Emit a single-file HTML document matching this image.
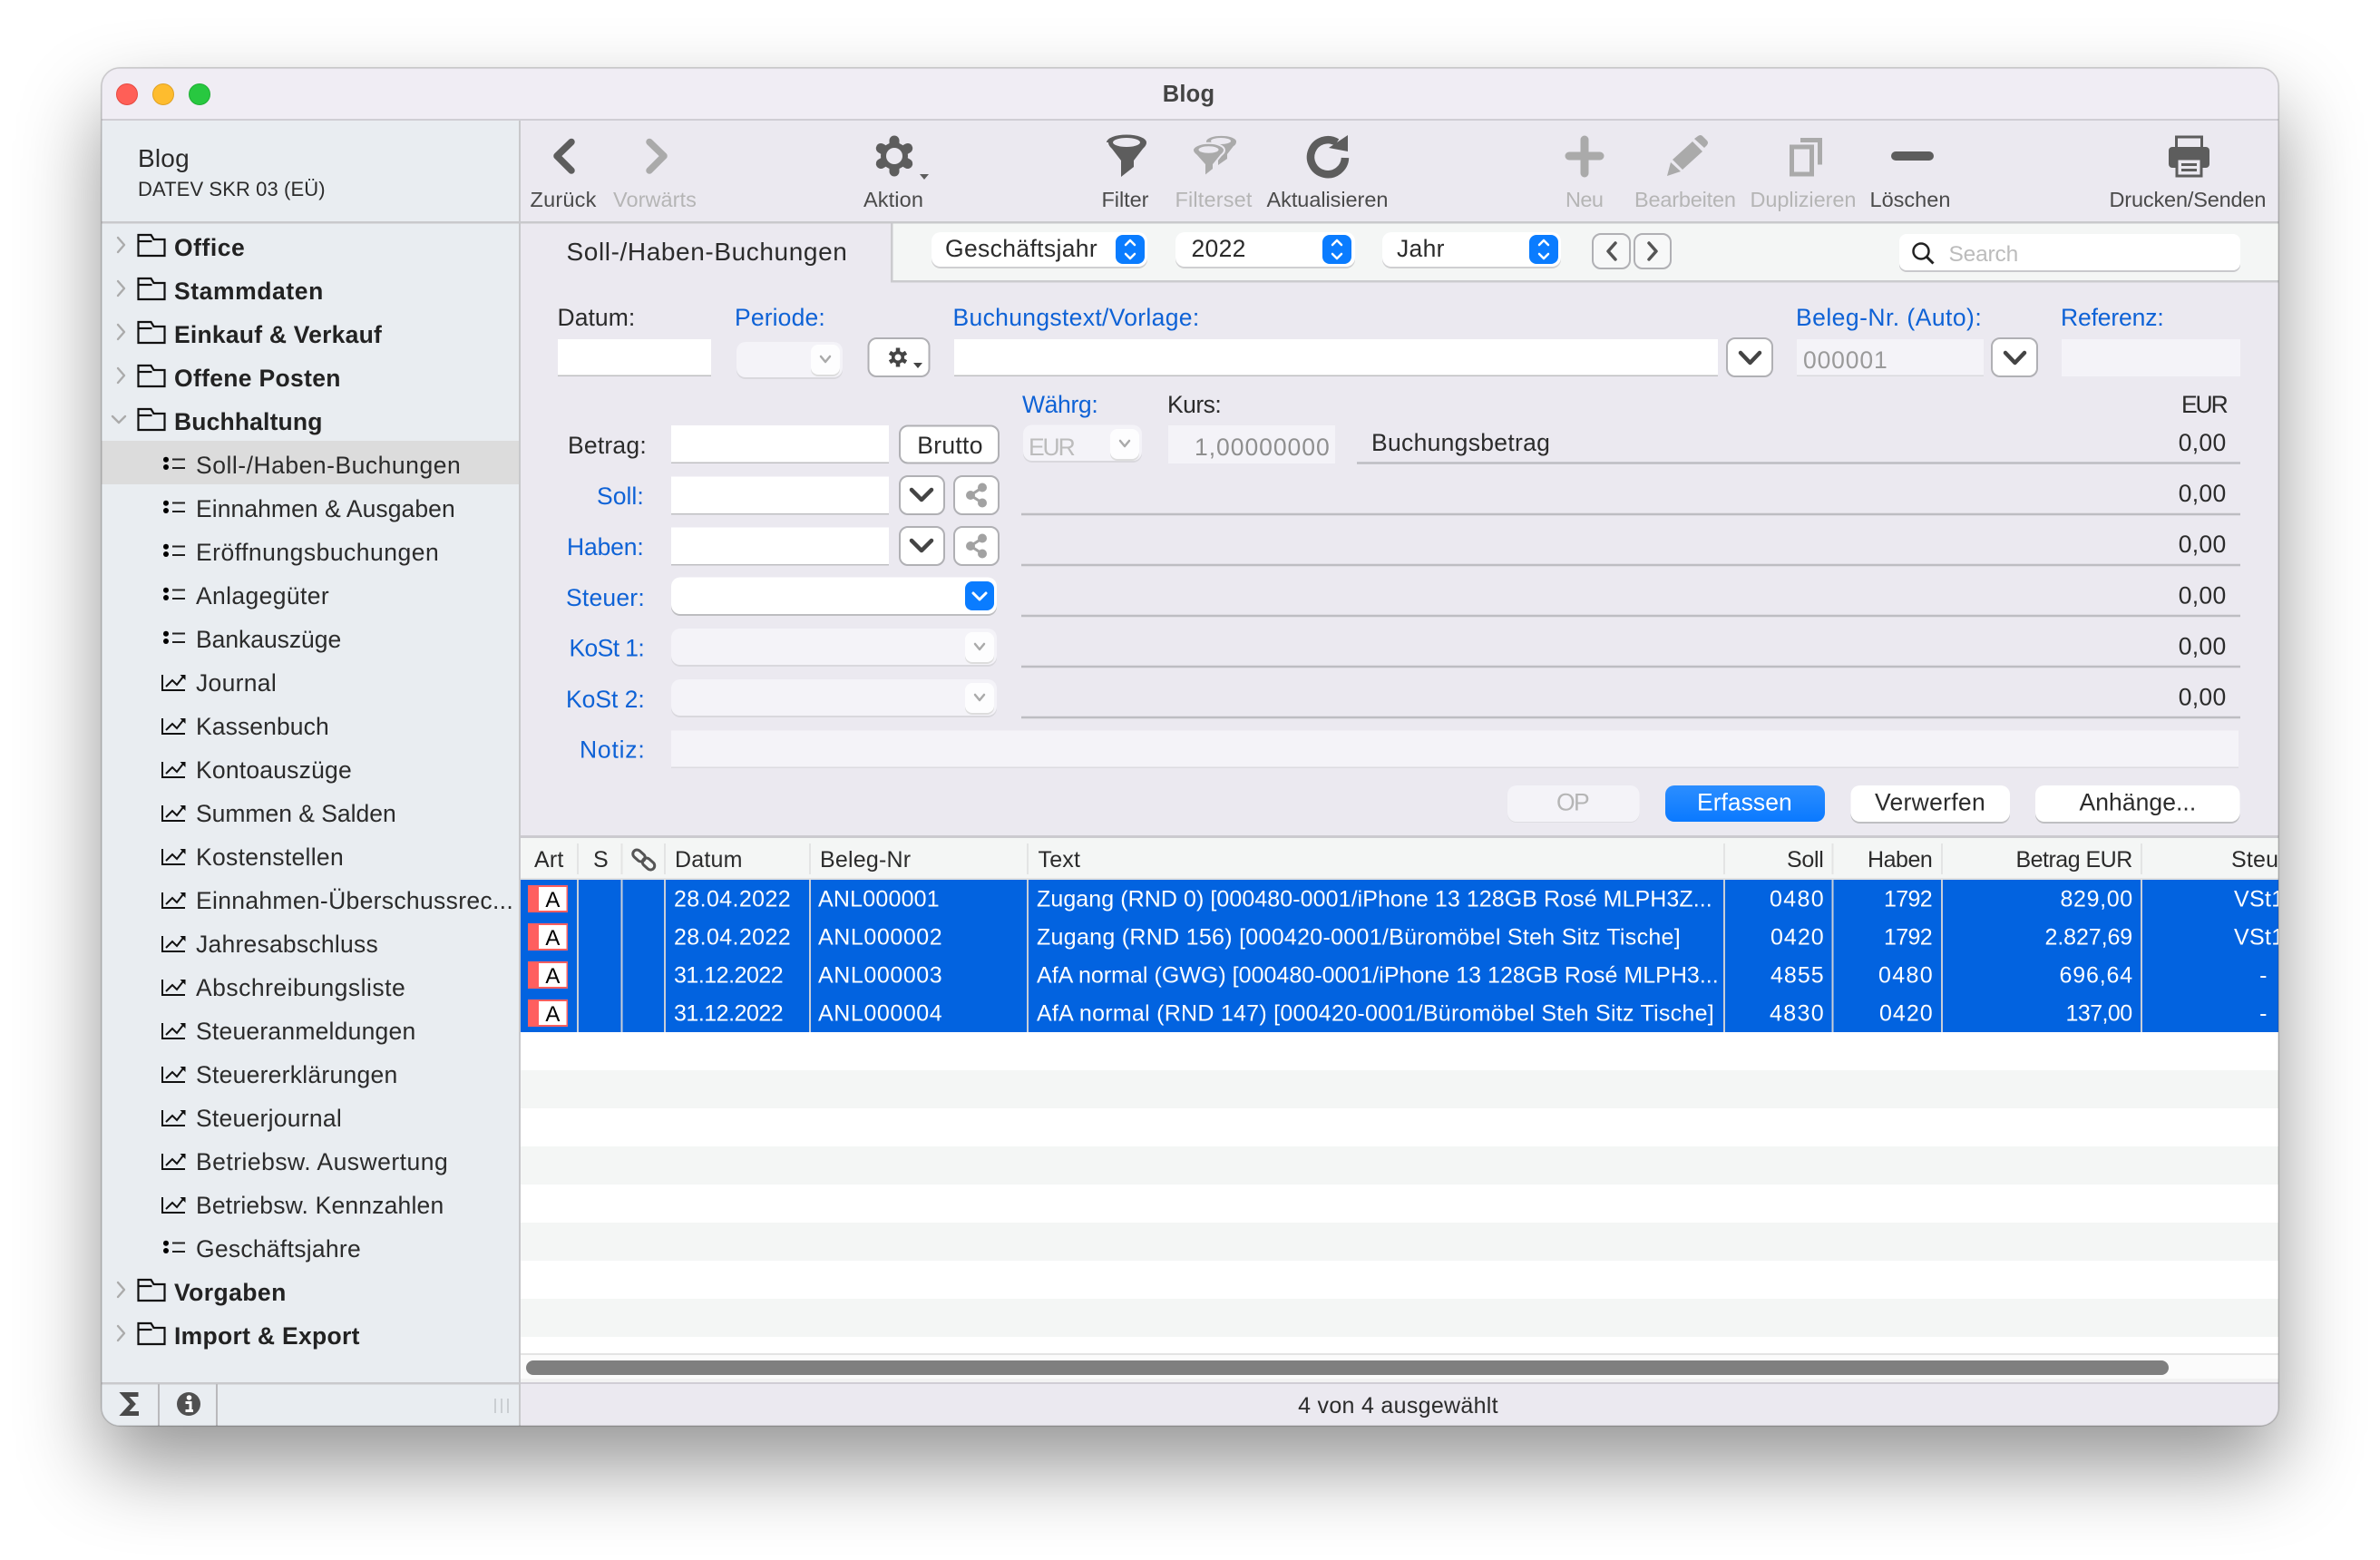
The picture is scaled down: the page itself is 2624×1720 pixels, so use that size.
<!DOCTYPE html>
<html lang="de"><head><meta charset="utf-8"><title>Blog</title>
<style>
html,body{margin:0;padding:0;background:#fff;width:2624px;height:1720px;overflow:hidden}
#w{position:absolute;left:112px;top:75px;width:2400px;height:1497px;border-radius:20px;box-shadow:0 44px 90px rgba(0,0,0,.42),0 0 2px rgba(0,0,0,.2)}
svg{position:absolute;left:0;top:0}
text{font-family:"Liberation Sans",sans-serif;font-size:26.5px;fill:#2b2b2b;letter-spacing:.3px;white-space:pre}
.b{font-weight:bold;fill:#222;letter-spacing:.2px}
.tb{font-size:23.5px;fill:#4a4a4a;letter-spacing:.1px;text-anchor:middle}
.d{fill:#b5b5b5}
.bl{fill:#0e62d6}
.r{text-anchor:end}
.m{text-anchor:middle}
.h{font-size:25px;letter-spacing:.2px;fill:#2b2b2b}
.c{font-size:25px;letter-spacing:.3px;fill:#fff}
.f{fill:#fff}
.fs{fill:#f4f3f8}
.ln{stroke:#bdbdc2;stroke-width:2.5;fill:none}
.btn{fill:#fff;stroke:#b0b0b4;stroke-width:2}
.ch{fill:none;stroke:#444;stroke-width:4.5;stroke-linecap:round;stroke-linejoin:round}
.cs{fill:none;stroke:#aaa;stroke-width:2.5;stroke-linecap:round;stroke-linejoin:round}
.cw{fill:none;stroke:#fff;stroke-width:2.5;stroke-linecap:round;stroke-linejoin:round}
</style></head><body>
<div id="w"></div>
<svg width="2624" height="1720" viewBox="0 0 2624 1720" xmlns="http://www.w3.org/2000/svg">
<defs>
<clipPath id="win"><rect x="112" y="75" width="2400" height="1497" rx="20"/></clipPath>
<g id="fo" fill="none" stroke="#111" stroke-width="2.2"><path d="M152.500 259h14l3 5h12v18h-29z"/><path d="M152.500 266h15"/></g>
<g id="cr" fill="none" stroke="#ababab" stroke-width="2.4" stroke-linecap="round" stroke-linejoin="round"><path d="M130 262l7 8-7 8"/></g>
<g id="li"><circle cx="183" cy="20.7" r="3"/><circle cx="183" cy="29" r="3"/><path d="M190 20.5h14M190 30h14" stroke="#222" stroke-width="2"/></g>
<g id="ct"><path d="M179 18V35H204" fill="none" stroke="#111" stroke-width="2"/><path d="M183 31l7-7 5 5 7-9" fill="none" stroke="#111" stroke-width="2"/><path d="M198.500 18H204.500V24z" fill="#111"/></g>
<g id="shr"><path d="M13 -8.500L0 0L13 8.500" fill="none" stroke="#a2a2a2" stroke-width="3"/><circle cx="0" cy="0" r="5" fill="#a2a2a2"/><circle cx="13" cy="-8.500" r="5" fill="#a2a2a2"/><circle cx="13" cy="8.500" r="5" fill="#a2a2a2"/></g>
<g id="pb"><rect x="0" y="2" width="32" height="33" rx="8" fill="#ddd"/><rect x="0" y="0" width="32" height="33" rx="8" fill="#fdfdfe"/><path d="M11 13l5 6 5-6" class="cs"/></g>
</defs>
<g clip-path="url(#win)">
<rect x="112" y="75" width="2400" height="1497" fill="#ebe9f0"/>
<rect x="112" y="75" width="2400" height="57" fill="#f0edf4"/>
<rect x="112" y="131" width="2400" height="2" fill="#d0ced4"/>
<!-- sidebar -->
<rect x="112" y="133" width="460" height="1439" fill="#e9edf1"/>
<rect x="112" y="486" width="460" height="48" fill="#dcdcdc"/>
<rect x="572" y="133" width="2" height="1439" fill="#c8c8cb"/>
<rect x="112" y="244" width="2400" height="2.500" fill="#c9c9cc"/>
<!-- traffic -->
<circle cx="140" cy="104" r="11.500" fill="#ff5f57" stroke="#e5483f" stroke-width="1"/>
<circle cx="180" cy="104" r="11.500" fill="#febc2e" stroke="#dfa123" stroke-width="1"/>
<circle cx="220" cy="104" r="11.500" fill="#28c840" stroke="#1fae33" stroke-width="1"/>
<text x="1310.500" y="112" class="b m" style="font-size:25.500px;fill:#444">Blog</text>
<!-- sidebar header -->
<text x="152" y="184" style="font-size:28px;letter-spacing:.2px;fill:#2b2b2b">Blog</text>
<text x="152" y="216" style="font-size:22px;letter-spacing:.1px;fill:#2b2b2b">DATEV SKR 03 (EÜ)</text>
<!-- folders -->
<use href="#fo"/><use href="#cr"/><text x="192" y="282" class="b" textLength="78">Office</text>
<use href="#fo" y="48"/><use href="#cr" y="48"/><text x="192" y="330" class="b" textLength="164.500">Stammdaten</text>
<use href="#fo" y="96"/><use href="#cr" y="96"/><text x="192" y="378" class="b" textLength="229">Einkauf &amp; Verkauf</text>
<use href="#fo" y="144"/><use href="#cr" y="144"/><text x="192" y="426" class="b" textLength="183.700">Offene Posten</text>
<use href="#fo" y="192"/><path d="M124 459l7 7 7-7" fill="none" stroke="#ababab" stroke-width="2.400" stroke-linecap="round" stroke-linejoin="round"/><text x="192" y="474" class="b" textLength="163.600">Buchhaltung</text>
<use href="#fo" y="1152"/><use href="#cr" y="1152"/><text x="192" y="1434" class="b" textLength="123.500">Vorgaben</text>
<use href="#fo" y="1200"/><use href="#cr" y="1200"/><text x="192" y="1482" class="b" textLength="204.600">Import &amp; Export</text>
<!-- items -->
<use href="#li" y="486"/><text x="216" y="522" textLength="292">Soll-/Haben-Buchungen</text>
<use href="#li" y="534"/><text x="216" y="570" textLength="286">Einnahmen &amp; Ausgaben</text>
<use href="#li" y="582"/><text x="216" y="618" textLength="268">Eröffnungsbuchungen</text>
<use href="#li" y="630"/><text x="216" y="666" textLength="147">Anlagegüter</text>
<use href="#li" y="678"/><text x="216" y="714" textLength="160.500">Bankauszüge</text>
<use href="#ct" y="726"/><text x="216" y="762" textLength="89">Journal</text>
<use href="#ct" y="774"/><text x="216" y="810" textLength="147">Kassenbuch</text>
<use href="#ct" y="822"/><text x="216" y="858" textLength="172">Kontoauszüge</text>
<use href="#ct" y="870"/><text x="216" y="906" textLength="221">Summen &amp; Salden</text>
<use href="#ct" y="918"/><text x="216" y="954" textLength="163">Kostenstellen</text>
<use href="#ct" y="966"/><text x="216" y="1002" textLength="350">Einnahmen-Überschussrec...</text>
<use href="#ct" y="1014"/><text x="216" y="1050" textLength="201">Jahresabschluss</text>
<use href="#ct" y="1062"/><text x="216" y="1098" textLength="231">Abschreibungsliste</text>
<use href="#ct" y="1110"/><text x="216" y="1146" textLength="242.500">Steueranmeldungen</text>
<use href="#ct" y="1158"/><text x="216" y="1194" textLength="222.500">Steuererklärungen</text>
<use href="#ct" y="1206"/><text x="216" y="1242" textLength="161">Steuerjournal</text>
<use href="#ct" y="1254"/><text x="216" y="1290" textLength="278">Betriebsw. Auswertung</text>
<use href="#ct" y="1302"/><text x="216" y="1338" textLength="273.500">Betriebsw. Kennzahlen</text>
<use href="#li" y="1350"/><text x="216" y="1386" textLength="182">Geschäftsjahre</text>
<!-- sidebar footer -->
<rect x="112" y="1524" width="460" height="2.500" fill="#c9c9cc"/>
<rect x="174" y="1526" width="2" height="46" fill="#b9b9bc"/><rect x="238" y="1526" width="2" height="46" fill="#b9b9bc"/>
<path d="M152.500 1537.500H137L146.500 1548L137 1558.500H153" fill="none" stroke="#4a4a4a" stroke-width="5"/>
<circle cx="208" cy="1548" r="13" fill="#505050"/><circle cx="208.500" cy="1541" r="2.800" fill="#fff"/><path d="M204.500 1546.500H210V1555M204.500 1555.500H213" stroke="#fff" stroke-width="3" fill="none"/>
<path d="M546 1542v16M553 1542v16M560 1542v16" stroke="#c3c6ca" stroke-width="1.600"/>
<!-- toolbar icons -->
<path d="M630 156.500L614 172L630 188" fill="none" stroke="#5d5d5d" stroke-width="7.500" stroke-linecap="round" stroke-linejoin="round"/>
<path d="M716 156.500L732 172L716 188" fill="none" stroke="#aaa" stroke-width="7.500" stroke-linecap="round" stroke-linejoin="round"/>
<text x="621" y="228" class="tb" textLength="73">Zurück</text><text x="722" y="228" class="tb d" textLength="92">Vorwärts</text>
<g transform="translate(986 172)"><circle r="15" fill="#5d5d5d"/><g stroke="#5d5d5d" stroke-width="11" stroke-linecap="round"><path d="M0-17V17"/><path d="M-14.700-8.500L14.700 8.500"/><path d="M-14.700 8.500L14.700-8.500"/></g><circle r="9" fill="#ebe9f0"/></g>
<path d="M1014 192h10l-5 6z" fill="#5d5d5d"/>
<text x="985" y="228" class="tb" textLength="66">Aktion</text>
<path d="M1220 157a22 8.500 0 0 1 44 0c0 3-2 5-4 7l-10 13v7l-14 11v-18l-10-13c-2-2-4-4-4-7z" fill="#5d5d5d"/><ellipse cx="1242" cy="157" rx="15" ry="5" fill="#ebe9f0"/>
<text x="1240.500" y="228" class="tb" textLength="52">Filter</text>
<path d="M1330 156a16 6 0 0 1 33 0c0 2-1 4-3 5l-7 9v5l-10 7v-12l-13-10z" fill="#aaa"/><ellipse cx="1346" cy="155.500" rx="11" ry="3.500" fill="#ebe9f0"/>
<path d="M1315 165.500a17 7.500 0 0 1 35 0c0 3-2 4-4 6l-8 10v5l-10 8v-13l-9-10c-2-2-4-3-4-6z" fill="#aaa" stroke="#ebe9f0" stroke-width="2"/><ellipse cx="1332.500" cy="165" rx="11" ry="3.800" fill="#ebe9f0"/>
<text x="1338" y="228" class="tb d" textLength="85">Filterset</text>
<path d="M1474 157A19 19 0 1 0 1483 174" fill="none" stroke="#5d5d5d" stroke-width="8.500"/><path d="M1486 149L1465 163L1486 167z" fill="#5d5d5d"/>
<text x="1463.500" y="228" class="tb" textLength="134">Aktualisieren</text>
<path d="M1747 154v37M1730 172h34" stroke="#aaa" stroke-width="9" stroke-linecap="round"/>
<text x="1747" y="228" class="tb d" textLength="42">Neu</text>
<path d="M1838 194l4-15 11 10z" fill="#aaa"/><path d="M1844 176L1866 156L1877 167L1855 187z" fill="#aaa"/><path d="M1868 153l4-3q3-2 5 0l5 5q2 2 0 5l-3 3z" fill="#aaa"/>
<text x="1858" y="228" class="tb d" textLength="112">Bearbeiten</text>
<rect x="1975.500" y="162" width="22" height="30" fill="none" stroke="#aaa" stroke-width="5"/><path d="M1985 154.500h21.500v27" fill="none" stroke="#aaa" stroke-width="5"/>
<text x="1988" y="228" class="tb d" textLength="117">Duplizieren</text>
<rect x="2085" y="167" width="47" height="10" rx="5" fill="#5d5d5d"/>
<text x="2106" y="228" class="tb" textLength="89">Löschen</text>
<rect x="2399.500" y="151" width="28" height="14" fill="none" stroke="#5d5d5d" stroke-width="3"/><rect x="2391" y="162" width="45" height="23" rx="4" fill="#5d5d5d"/><rect x="2400" y="175" width="27" height="19" fill="#ebe9f0" stroke="#5d5d5d" stroke-width="3"/><path d="M2405 181.500h17M2405 187.500h17" stroke="#5d5d5d" stroke-width="3"/>
<text x="2412" y="228" class="tb" textLength="173">Drucken/Senden</text>
<!-- tab strip -->
<rect x="983" y="246.500" width="1530" height="63" fill="#f4f6f5"/>
<rect x="982" y="246.500" width="2.500" height="64" fill="#cbcbce"/>
<rect x="982" y="309" width="1531" height="2.500" fill="#cbcbce"/>
<text x="624.500" y="287" style="font-size:28px;letter-spacing:.6px">Soll-/Haben-Buchungen</text>
<!-- popups -->
<rect x="1027" y="258" width="238" height="38" rx="10" fill="#cfcfd1"/><rect x="1027" y="256" width="238" height="38" rx="10" fill="#fff"/>
<rect x="1230" y="259" width="32" height="32" rx="8" fill="#0a7cff"/><path d="M1241 270l5-5 5 5M1241 280l5 5 5-5" class="cw"/>
<text x="1042" y="283" textLength="168">Geschäftsjahr</text>
<rect x="1296" y="258" width="198" height="38" rx="10" fill="#cfcfd1"/><rect x="1296" y="256" width="198" height="38" rx="10" fill="#fff"/>
<rect x="1458" y="259" width="32" height="32" rx="8" fill="#0a7cff"/><path d="M1469 270l5-5 5 5M1469 280l5 5 5-5" class="cw"/>
<text x="1313.500" y="283">2022</text>
<rect x="1524" y="258" width="197" height="38" rx="10" fill="#cfcfd1"/><rect x="1524" y="256" width="197" height="38" rx="10" fill="#fff"/>
<rect x="1686" y="259" width="32" height="32" rx="8" fill="#0a7cff"/><path d="M1697 270l5-5 5 5M1697 280l5 5 5-5" class="cw"/>
<text x="1540" y="283">Jahr</text>
<rect x="1756" y="258" width="41" height="38" rx="9" class="btn" style="fill:#f7f8f8"/><rect x="1802" y="258" width="40" height="38" rx="9" class="btn" style="fill:#f7f8f8"/>
<path d="M1781 268l-8 9 8 9" fill="none" stroke="#555" stroke-width="3.500" stroke-linecap="round" stroke-linejoin="round"/><path d="M1818 268l8 9-8 9" fill="none" stroke="#555" stroke-width="3.500" stroke-linecap="round" stroke-linejoin="round"/>
<rect x="2094" y="260" width="376" height="40" rx="8" fill="#c9c9cc"/><rect x="2094" y="258" width="376" height="40" rx="8" fill="#fff"/>
<circle cx="2118" cy="277" r="8.500" fill="none" stroke="#222" stroke-width="2.500"/><path d="M2124.500 283.500l7 7" stroke="#222" stroke-width="3"/>
<text x="2148.500" y="288" style="font-size:24.500px;fill:#bcbcbc" textLength="77">Search</text>
<!-- form labels -->
<text x="614.500" y="359" textLength="86">Datum:</text>
<text x="810" y="359" class="bl" textLength="100">Periode:</text>
<text x="1050.500" y="359" class="bl" textLength="272">Buchungstext/Vorlage:</text>
<text x="1980" y="359" class="bl" textLength="205">Beleg-Nr. (Auto):</text>
<text x="2272" y="359" class="bl" textLength="114">Referenz:</text>
<!-- row 1 inputs -->
<rect x="615" y="374" width="169" height="41" fill="#bfbfc2"/><rect x="615" y="374" width="169" height="39.500" fill="#fff"/>
<rect x="812" y="379" width="117" height="39" rx="10" fill="#d9d8dd"/><rect x="812" y="377" width="117" height="39" rx="10" fill="#f4f3f8"/>
<use href="#pb" x="894" y="380"/>
<rect x="957.500" y="373" width="67" height="42" rx="9" class="btn"/>
<g transform="translate(990 394)"><circle r="7" fill="#444"/><g stroke="#444" stroke-width="4.500"><path d="M0-10.500V10.500"/><path d="M-9-5.200L9 5.200"/><path d="M-9 5.200L9-5.200"/></g><circle r="3.500" fill="#fff"/></g>
<path d="M1007 400h10l-5 6z" fill="#444"/>
<rect x="1052" y="374" width="842" height="41" fill="#bfbfc2"/><rect x="1052" y="374" width="842" height="39.500" fill="#fff"/>
<rect x="1904" y="373" width="50" height="42" rx="9" class="btn"/><path d="M1919 389l10.500 11 10.500-11" class="ch"/>
<rect x="1981" y="374" width="206" height="41" fill="#dadade"/><rect x="1981" y="374" width="206" height="39.500" fill="#f4f3f8"/>
<text x="1988" y="406" style="fill:#9a9a9a" textLength="93">000001</text>
<rect x="2196" y="373" width="50" height="42" rx="9" class="btn"/><path d="M2211 389l10.500 11 10.500-11" class="ch"/>
<rect x="2273" y="374" width="197" height="41" fill="#f4f3f8"/>
<!-- row 2 -->
<text x="1127" y="455" class="bl" textLength="84">Währg:</text>
<text x="1287" y="455" textLength="60">Kurs:</text>
<text x="2457" y="455" class="r" textLength="52">EUR</text>
<text x="713" y="500" class="r" textLength="87">Betrag:</text>
<rect x="740" y="469" width="240" height="42" fill="#bfbfc2"/><rect x="740" y="469" width="240" height="40.500" fill="#fff"/>
<rect x="992" y="469.500" width="109" height="41" rx="9" class="btn"/>
<text x="1047.500" y="500" class="m">Brutto</text>
<rect x="1128" y="470" width="131" height="40" rx="10" fill="#d9d8dd"/><rect x="1128" y="468.500" width="131" height="39.500" rx="10" fill="#f4f3f8"/>
<use href="#pb" x="1224" y="473"/>
<text x="1134" y="502" style="fill:#bcbcbc" textLength="52">EUR</text>
<rect x="1288" y="469" width="184" height="42" fill="#f4f3f8"/>
<text x="1466" y="502" class="r" style="fill:#8f8f8f" textLength="149">1,00000000</text>
<text x="1512" y="497">Buchungsbetrag</text>
<path d="M1496 510.500H2470" class="ln"/>
<text x="2454.500" y="497" class="r">0,00</text>
<!-- soll -->
<text x="710" y="556" class="r bl" textLength="52">Soll:</text>
<rect x="740" y="525.500" width="240" height="42" fill="#bfbfc2"/><rect x="740" y="525.500" width="240" height="40.500" fill="#fff"/>
<rect x="992" y="525" width="49" height="42" rx="9" class="btn"/><path d="M1005 540l11 11 11-11" class="ch"/>
<rect x="1052" y="525" width="49" height="42" rx="9" class="btn"/><use href="#shr" x="1070" y="546"/>
<path d="M1126 567H2470" class="ln"/><text x="2454.500" y="553" class="r">0,00</text>
<!-- haben -->
<text x="710" y="612" class="r bl" textLength="85">Haben:</text>
<rect x="740" y="581.500" width="240" height="42" fill="#bfbfc2"/><rect x="740" y="581.500" width="240" height="40.500" fill="#fff"/>
<rect x="992" y="581" width="49" height="42" rx="9" class="btn"/><path d="M1005 596l11 11 11-11" class="ch"/>
<rect x="1052" y="581" width="49" height="42" rx="9" class="btn"/><use href="#shr" x="1070" y="602"/>
<path d="M1126 623H2470" class="ln"/><text x="2454.500" y="609" class="r">0,00</text>
<!-- steuer -->
<text x="711" y="668" class="r bl" textLength="87">Steuer:</text>
<rect x="740" y="638.500" width="359" height="40.500" rx="10" fill="#bdbdc0"/><rect x="740" y="636.500" width="359" height="40.500" rx="10" fill="#fff"/>
<rect x="1064" y="641" width="32" height="32" rx="8" fill="#0a7cff"/><path d="M1073 654l7 7 7-7" fill="none" stroke="#fff" stroke-width="3" stroke-linecap="round" stroke-linejoin="round"/>
<path d="M1126 679H2470" class="ln"/><text x="2454.500" y="665.500" class="r">0,00</text>
<!-- kost1 -->
<text x="711" y="723.500" class="r bl" textLength="83.500">KoSt 1:</text>
<rect x="740" y="695" width="359" height="40" rx="10" fill="#d9d8dd"/><rect x="740" y="693" width="359" height="40" rx="10" fill="#f4f3f8"/>
<use href="#pb" x="1064" y="697"/>
<path d="M1126 735H2470" class="ln"/><text x="2454.500" y="721.500" class="r">0,00</text>
<!-- kost2 -->
<text x="711" y="780" class="r bl" textLength="87">KoSt 2:</text>
<rect x="740" y="751" width="359" height="40" rx="10" fill="#d9d8dd"/><rect x="740" y="749" width="359" height="40" rx="10" fill="#f4f3f8"/>
<use href="#pb" x="1064" y="753"/>
<path d="M1126 791H2470" class="ln"/><text x="2454.500" y="777.500" class="r">0,00</text>
<!-- notiz -->
<text x="711" y="835.500" class="r bl" textLength="72">Notiz:</text>
<rect x="740" y="805.500" width="1728" height="41" fill="#f4f3f8"/><rect x="740" y="845.500" width="1728" height="1.500" fill="#dcdbe0"/>
<!-- buttons -->
<rect x="1662" y="868" width="145.500" height="39" rx="10" fill="#dedde2"/><rect x="1662" y="866" width="145.500" height="40" rx="10" fill="#f4f3f8"/>
<text x="1734.500" y="893.500" class="m" style="fill:#b5b5b5" textLength="37">OP</text>
<linearGradient id="gb" x1="0" y1="0" x2="0" y2="1"><stop offset="0" stop-color="#2c8eff"/><stop offset="1" stop-color="#0a79ff"/></linearGradient>
<rect x="1836" y="866" width="176" height="40" rx="10" fill="url(#gb)"/>
<text x="1923.500" y="893.500" class="m" style="fill:#fff" textLength="105">Erfassen</text>
<rect x="2040.500" y="868" width="175.500" height="40" rx="10" fill="#bfbfc2"/><rect x="2040.500" y="866" width="175.500" height="40" rx="10" fill="#fff"/>
<text x="2128" y="893.500" class="m" textLength="122">Verwerfen</text>
<rect x="2244" y="868" width="225.500" height="40" rx="10" fill="#bfbfc2"/><rect x="2244" y="866" width="225.500" height="40" rx="10" fill="#fff"/>
<text x="2357" y="893.500" class="m" textLength="129">Anhänge...</text>
<!-- table -->
<rect x="574" y="921" width="1938" height="3" fill="#cbcacf"/>
<rect x="574" y="924" width="1938" height="44" fill="#f4f6f5"/>
<rect x="574" y="968" width="1938" height="2" fill="#e3e3e3"/>
<g fill="#e3e4e4"><rect x="636" y="930" width="2" height="34"/><rect x="684.500" y="930" width="2" height="34"/><rect x="732" y="930" width="2" height="34"/><rect x="892" y="930" width="2" height="34"/><rect x="1132" y="930" width="2" height="34"/><rect x="1900" y="930" width="2" height="34"/><rect x="2019.500" y="930" width="2" height="34"/><rect x="2140" y="930" width="2" height="34"/><rect x="2360" y="930" width="2" height="34"/></g>
<text x="589" y="956" class="h">Art</text><text x="654" y="956" class="h">S</text>
<g fill="none" stroke="#555" stroke-width="3"><rect x="-7.500" y="-4.500" width="15" height="9" rx="4.500" transform="translate(704.500 943.500) rotate(42)"/><rect x="-7.500" y="-4.500" width="15" height="9" rx="4.500" transform="translate(715 952.500) rotate(42)"/></g>
<text x="744" y="956" class="h">Datum</text><text x="904" y="956" class="h">Beleg-Nr</text><text x="1144.500" y="956" class="h">Text</text>
<text x="2011" y="956" class="h r" textLength="41">Soll</text><text x="2131" y="956" class="h r" textLength="72">Haben</text><text x="2351.500" y="956" class="h r" textLength="129">Betrag EUR</text><text x="2460" y="956" class="h">Steu</text>
<!-- rows -->
<rect x="574" y="970" width="1938" height="168" fill="#0263e0"/>
<g fill="#c8ced8"><rect x="636" y="970" width="2" height="168"/><rect x="684.500" y="970" width="2" height="168"/><rect x="732" y="970" width="2" height="168"/><rect x="892" y="970" width="2" height="168"/><rect x="1132" y="970" width="2" height="168"/><rect x="1900" y="970" width="2" height="168"/><rect x="2019.500" y="970" width="2" height="168"/><rect x="2140" y="970" width="2" height="168"/><rect x="2360" y="970" width="2" height="168"/></g>
<g fill="#ff5f5f"><rect x="582" y="976" width="44" height="30"/><rect x="582" y="1018" width="44" height="30"/><rect x="582" y="1060" width="44" height="30"/><rect x="582" y="1102" width="44" height="30"/></g>
<g fill="#fff"><rect x="594" y="978" width="30.500" height="26"/><rect x="594" y="1020" width="30.500" height="26"/><rect x="594" y="1062" width="30.500" height="26"/><rect x="594" y="1104" width="30.500" height="26"/></g>
<text x="609.500" y="1000" class="m" style="font-size:24px;fill:#000">A</text><text x="609.500" y="1042" class="m" style="font-size:24px;fill:#000">A</text><text x="609.500" y="1084" class="m" style="font-size:24px;fill:#000">A</text><text x="609.500" y="1126" class="m" style="font-size:24px;fill:#000">A</text>
<text x="743" y="999.500" class="c" textLength="129">28.04.2022</text><text x="902" y="999.500" class="c" textLength="134">ANL000001</text><text x="1143" y="999.500" class="c" textLength="745">Zugang (RND 0) [000480-0001/iPhone 13 128GB Rosé MLPH3Z...</text><text x="2011" y="999.500" class="c r" textLength="60">0480</text><text x="2131" y="999.500" class="c r" textLength="54">1792</text><text x="2351.500" y="999.500" class="c r" textLength="80">829,00</text><text x="2463" y="999.500" class="c">VSt1</text>
<text x="743" y="1041.500" class="c" textLength="129">28.04.2022</text><text x="902" y="1041.500" class="c" textLength="137">ANL000002</text><text x="1143" y="1041.500" class="c" textLength="710">Zugang (RND 156) [000420-0001/Büromöbel Steh Sitz Tische]</text><text x="2011" y="1041.500" class="c r" textLength="59">0420</text><text x="2131" y="1041.500" class="c r" textLength="54">1792</text><text x="2351.500" y="1041.500" class="c r" textLength="97">2.827,69</text><text x="2463" y="1041.500" class="c">VSt1</text>
<text x="743" y="1083.500" class="c" textLength="121">31.12.2022</text><text x="902" y="1083.500" class="c" textLength="137">ANL000003</text><text x="1143" y="1083.500" class="c" textLength="752">AfA normal (GWG) [000480-0001/iPhone 13 128GB Rosé MLPH3...</text><text x="2011" y="1083.500" class="c r" textLength="59">4855</text><text x="2131" y="1083.500" class="c r" textLength="60">0480</text><text x="2351.500" y="1083.500" class="c r" textLength="81">696,64</text><text x="2495.500" y="1083.500" class="c m">-</text>
<text x="743" y="1125.500" class="c" textLength="121">31.12.2022</text><text x="902" y="1125.500" class="c" textLength="137">ANL000004</text><text x="1143" y="1125.500" class="c" textLength="747">AfA normal (RND 147) [000420-0001/Büromöbel Steh Sitz Tische]</text><text x="2011" y="1125.500" class="c r" textLength="60">4830</text><text x="2131" y="1125.500" class="c r" textLength="59">0420</text><text x="2351.500" y="1125.500" class="c r" textLength="74">137,00</text><text x="2495.500" y="1125.500" class="c m">-</text>
<!-- empty rows -->
<rect x="574" y="1138" width="1938" height="354" fill="#fff"/>
<g fill="#f4f6f5"><rect x="574" y="1180" width="1938" height="42"/><rect x="574" y="1264" width="1938" height="42"/><rect x="574" y="1348" width="1938" height="42"/><rect x="574" y="1432" width="1938" height="42"/></g>
<rect x="574" y="1492" width="1938" height="2" fill="#e3e3e3"/>
<rect x="574" y="1494" width="1938" height="26" fill="#fbfbfb"/>
<rect x="574" y="1520" width="1938" height="4" fill="#f3f3f3"/>
<rect x="574" y="1524" width="1938" height="2" fill="#d0cdd5"/>
<rect x="580" y="1500" width="1811" height="16" rx="8" fill="#7f7f7f"/>
<text x="1541.500" y="1558" class="m" style="font-size:25px;letter-spacing:.3px">4 von 4 ausgewählt</text>
</g>
<rect x="112" y="75" width="2400" height="1497" rx="20" fill="none" stroke="#000" stroke-opacity=".14" stroke-width="1.500"/>
</svg>
</body></html>
